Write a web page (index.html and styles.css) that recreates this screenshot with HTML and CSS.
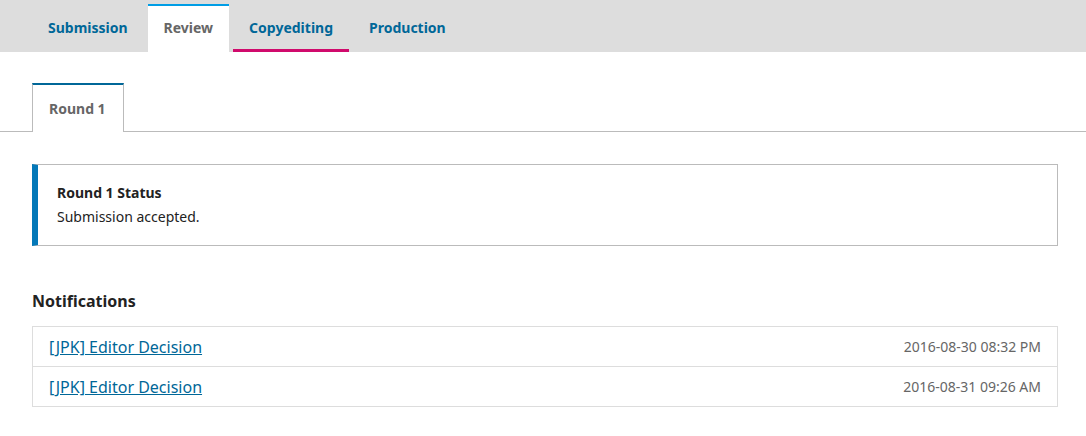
FILE: index.html
```html
<!DOCTYPE html>
<html>
<head>
<meta charset="utf-8">
<link rel="stylesheet" href="styles.css">
</head>
<body>
<nav class="topnav">
  <a class="tab">Submission</a>
  <a class="tab tab-active">Review</a>
  <a class="tab tab-marked">Copyediting</a>
  <a class="tab">Production</a>
</nav>
<div class="round-tabs">
  <span class="round-tab">Round 1</span>
</div>
<main class="content">
  <section class="status">
    <div class="status-title">Round 1 Status</div>
    <div class="status-text">Submission accepted.</div>
  </section>
  <h2 class="notif-heading">Notifications</h2>
  <div class="notif-list">
    <div class="notif-row">
      <a class="notif-link" href="#">[JPK] Editor Decision</a>
      <span class="notif-date">2016-08-30 08:32 PM</span>
    </div>
    <div class="notif-row">
      <a class="notif-link" href="#">[JPK] Editor Decision</a>
      <span class="notif-date">2016-08-31 09:26 AM</span>
    </div>
  </div>
</main>
</body>
</html>
```
FILE: styles.css
```css
* { box-sizing: border-box; }
body {
  margin: 0;
  font-family: "Noto Sans", "Open Sans", sans-serif;
  color: #222;
  background: #fff;
}
.topnav {
  display: flex;
  align-items: flex-end;
  gap: 4px;
  height: 52px;
  padding-left: 32px;
  background: #ddd;
}
.tab {
  display: flex;
  align-items: center;
  height: 48px;
  padding: 0 16px;
  font-size: 14px;
  font-weight: 700;
  color: #006798;
  border-top: 2px solid transparent;
  border-bottom: 3px solid transparent;
}
.tab-active {
  background: #fff;
  color: #666;
  border-top-color: #009de5;
}
.tab-marked {
  border-bottom-color: #d00a6c;
}
.round-tabs {
  display: flex;
  margin-top: 31px;
  padding-left: 32px;
  border-bottom: 1px solid #bbb;
}
.round-tab {
  display: flex;
  align-items: center;
  height: 49px;
  margin-bottom: -1px;
  padding: 0 17px 0 16px;
  background: #fff;
  border: 1px solid #bbb;
  border-top: 2px solid #006798;
  border-bottom: none;
  font-size: 14px;
  font-weight: 700;
  color: #666;
}
.content {
  padding: 32px 28px 0 32px;
}
.status {
  height: 82px;
  padding: 16px 20px 16px 19px;
  border: 1px solid #bbb;
  border-left: 6px solid #0478b8;
}
.status-title {
  font-size: 14px;
  font-weight: 700;
  line-height: 24px;
}
.status-text {
  font-size: 14px;
  line-height: 24px;
}
.notif-heading {
  margin: 43px 0 13px;
  font-size: 16px;
  line-height: 24px;
  font-weight: 700;
}
.notif-list {
  border: 1px solid #ddd;
}
.notif-row {
  display: flex;
  align-items: center;
  justify-content: space-between;
  height: 39px;
  padding: 0 16px;
}
.notif-row + .notif-row {
  border-top: 1px solid #ddd;
  height: 40px;
}
.notif-link {
  font-size: 16px;
  color: #006798;
  text-decoration: underline;
}
.notif-date {
  font-size: 14px;
  color: #666;
}
```
